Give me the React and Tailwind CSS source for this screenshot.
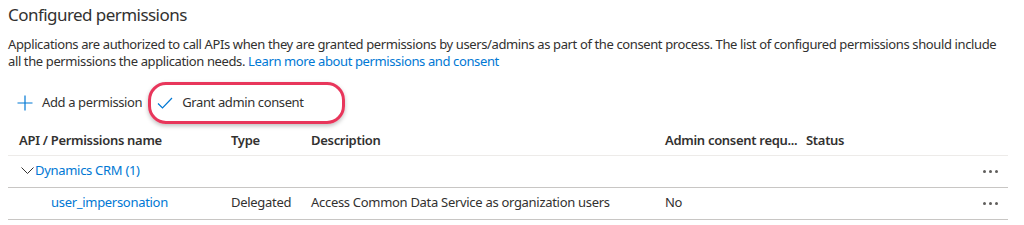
import React from 'react';

function Dots() {
  return (
    <span className="flex items-center gap-[3px]">
      <span className="w-[3px] h-[3px] rounded-full bg-[#605e5c]" />
      <span className="w-[3px] h-[3px] rounded-full bg-[#605e5c]" />
      <span className="w-[3px] h-[3px] rounded-full bg-[#605e5c]" />
    </span>
  );
}

export default function App() {
  return (
    <div className="w-[1024px] h-[225px] bg-white text-[#323130] overflow-hidden font-['Noto_Sans',sans-serif]">
      <div className="pl-2 pr-4">
        <h2 className="text-[17px] leading-[24px] pt-[3px] tracking-[-0.55px]">Configured permissions</h2>
        <p className="mt-[9px] text-[13px] leading-[16.5px] tracking-[-0.38px]">
          <span className="whitespace-nowrap">Applications are authorized to call APIs when they are granted permissions by users/admins as part of the consent process. The list of configured permissions should include</span>
          <br />
          all the permissions the application needs.{' '}
          <a className="text-[#0078d4]" href="#">Learn more about permissions and consent</a>
        </p>

        <div className="flex items-center h-[44px] mt-[12px] text-[13px] tracking-[-0.38px]">
          <button className="flex items-center gap-[9px] pl-[9px] pr-[6px] h-[32px]">
            <svg width="16" height="16" viewBox="0 0 16 16">
              <path d="M8 0.5v15M0.5 8h15" stroke="#0078d4" strokeWidth="1.2" fill="none" />
            </svg>
            <span>Add a permission</span>
          </button>
          <div className="flex items-center h-[42px] w-[197px] rounded-[18px] border-[3px] border-[#e8365b] shadow-[0_2px_4px_rgba(0,0,0,0.25)] pl-[6px]">
            <svg width="16" height="16" viewBox="0 0 16 16">
              <path d="M1 8.5l4.5 4.5L15 3" stroke="#0078d4" strokeWidth="1.2" fill="none" />
            </svg>
            <span className="ml-[9px]">Grant admin consent</span>
          </div>
        </div>

        <table className="mt-[1px] w-[1000px] text-[13px] tracking-[-0.3px] border-collapse">
          <thead>
            <tr className="border-b border-[#edebe9] h-[29px]">
              <th className="text-left font-semibold pl-[11px] w-[223px]">API / Permissions name</th>
              <th className="text-left font-semibold w-[80px]">Type</th>
              <th className="text-left font-semibold w-[354px]">Description</th>
              <th className="text-left font-semibold w-[141px]">Admin consent requ...</th>
              <th className="text-left font-semibold">Status</th>
              <th className="w-[40px]"></th>
            </tr>
          </thead>
          <tbody>
            <tr className="border-b border-[#c8c6c4] h-[32px]">
              <td colSpan={5} className="pl-[13px]">
                <span className="flex items-center text-[#0078d4]">
                  <svg width="13" height="8" viewBox="0 0 13 8" className="mr-[1px]">
                    <path d="M0.5 0.5l6 6 6-6" stroke="#323130" strokeWidth="1" fill="none" />
                  </svg>
                  Dynamics CRM (1)
                </span>
              </td>
              <td className="pl-[15px]"><Dots /></td>
            </tr>
            <tr className="border-b border-[#c8c6c4] h-[32px]">
              <td className="pl-[43px] text-[#0078d4]">user_impersonation</td>
              <td>Delegated</td>
              <td>Access Common Data Service as organization users</td>
              <td>No</td>
              <td></td>
              <td className="pl-[15px]"><Dots /></td>
            </tr>
          </tbody>
        </table>
      </div>
    </div>
  );
}
